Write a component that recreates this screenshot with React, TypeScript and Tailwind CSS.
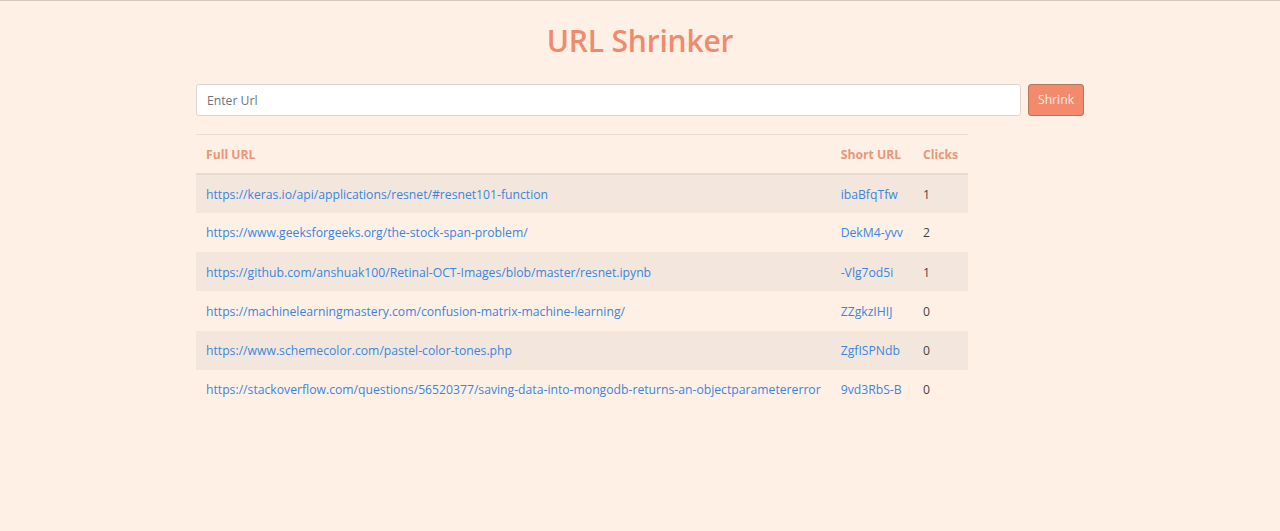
import React from 'react';

const urls = [
  { full: 'https://keras.io/api/applications/resnet/#resnet101-function', short: 'ibaBfqTfw', clicks: 1 },
  { full: 'https://www.geeksforgeeks.org/the-stock-span-problem/', short: 'DekM4-yvv', clicks: 2 },
  { full: 'https://github.com/anshuak100/Retinal-OCT-Images/blob/master/resnet.ipynb', short: '-Vlg7od5i', clicks: 1 },
  { full: 'https://machinelearningmastery.com/confusion-matrix-machine-learning/', short: 'ZZgkzIHIJ', clicks: 0 },
  { full: 'https://www.schemecolor.com/pastel-color-tones.php', short: 'ZgfISPNdb', clicks: 0 },
  { full: 'https://stackoverflow.com/questions/56520377/saving-data-into-mongodb-returns-an-objectparametererror', short: '9vd3RbS-B', clicks: 0 },
];

export default function App() {
  return (
    <div
      className="min-h-[531px] bg-[#fff0e5] border-t border-[#d6c9c2] text-[#212529]"
      style={{ fontFamily: '"Open Sans", "Noto Sans", sans-serif' }}
    >
      {/* Title */}
      <h1 className="text-center text-[30px] font-semibold text-[#ef8b6d] pt-[18px] leading-[44px] tracking-[-0.2px]">
        URL Shrinker
      </h1>

      <div className="w-[888px] mx-auto">
        {/* Form */}
        <form className="flex gap-[7px] mt-[21px]" onSubmit={(e) => e.preventDefault()}>
          <input
            type="text"
            placeholder="Enter Url"
            className="flex-1 h-[32px] bg-white border border-[#dcd6d2] rounded-[3px] px-[10px] text-[12.2px] placeholder:text-[#6c757d] outline-none"
          />
          <button
            type="submit"
            className="w-[56px] h-[32px] bg-[#f38a6b] border border-[#b07a5a] rounded-[3px] text-[12.2px] text-[#fdeee6]"
          >
            Shrink
          </button>
        </form>

        {/* Table */}
        <table className="mt-[18px] w-[768px] text-[12.2px] border-collapse">
          <thead>
            <tr className="border-t border-[#e6ddd6] border-b-2 border-b-[#e6dcd4]">
              <th className="w-[634px] h-[39px] px-[10px] pt-[2px] text-left font-bold text-[#e9967b]">Full URL</th>
              <th className="w-[82px] px-[10px] pt-[2px] text-left font-bold text-[#e9967b] whitespace-nowrap">Short URL</th>
              <th className="px-[10px] pt-[2px] text-left font-bold text-[#e9967b]">Clicks</th>
            </tr>
          </thead>
          <tbody>
            {urls.map((u, i) => (
              <tr key={u.short} className={i % 2 === 0 ? 'bg-[#f3e6dc]' : ''}>
                <td className="h-[39.3px] px-[10px] pt-[2px] whitespace-nowrap">
                  <a href={u.full} className="text-[#3a86e0]">{u.full}</a>
                </td>
                <td className="px-[10px] pt-[2px] whitespace-nowrap">
                  <a href={u.full} className="text-[#3a86e0]">{u.short}</a>
                </td>
                <td className="px-[10px] pt-[2px] text-[#444]">{u.clicks}</td>
              </tr>
            ))}
          </tbody>
        </table>
      </div>
    </div>
  );
}
